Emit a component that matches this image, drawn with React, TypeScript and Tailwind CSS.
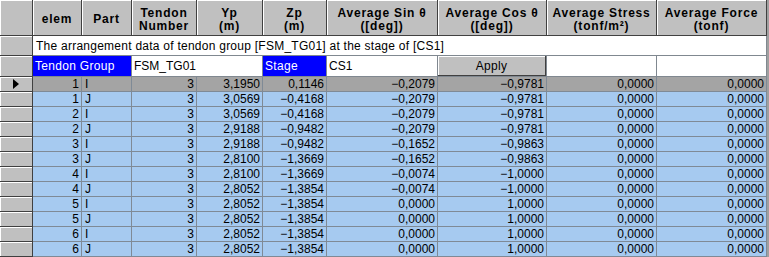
const cols = "grid-cols-[33px_49px_50px_65px_66px_64px_111px_109px_110px_110px]";

const rows = [
  ["1", "I", "3", "3,1950", "0,1146", "−0,2079", "−0,9781"],
  ["1", "J", "3", "3,0569", "−0,4168", "−0,2079", "−0,9781"],
  ["2", "I", "3", "3,0569", "−0,4168", "−0,2079", "−0,9781"],
  ["2", "J", "3", "2,9188", "−0,9482", "−0,2079", "−0,9781"],
  ["3", "I", "3", "2,9188", "−0,9482", "−0,1652", "−0,9863"],
  ["3", "J", "3", "2,8100", "−1,3669", "−0,1652", "−0,9863"],
  ["4", "I", "3", "2,8100", "−1,3669", "−0,0074", "−1,0000"],
  ["4", "J", "3", "2,8052", "−1,3854", "−0,0074", "−1,0000"],
  ["5", "I", "3", "2,8052", "−1,3854", "0,0000", "1,0000"],
  ["5", "J", "3", "2,8052", "−1,3854", "0,0000", "1,0000"],
  ["6", "I", "3", "2,8052", "−1,3854", "0,0000", "1,0000"],
  ["6", "J", "3", "2,8052", "−1,3854", "0,0000", "1,0000"],
];

const headers: [string, string?][] = [
  ["elem"],
  ["Part"],
  ["Tendon", "Number"],
  ["Yp", "(m)"],
  ["Zp", "(m)"],
  ["Average Sin θ", "([deg])"],
  ["Average Cos θ", "([deg])"],
  ["Average Stress", "(tonf/m²)"],
  ["Average Force", "(tonf)"],
];

const rowHead =
  "bg-[#c0c0c0] border-r border-b border-[#404040] shadow-[inset_1px_1px_0_#ffffff]";

export default function App() {
  return (
    <div
      className="w-[769px] h-[257px] overflow-hidden bg-[#a0a0a0] text-black"
      style={{ fontFamily: '"Liberation Sans", Arial, sans-serif' }}
    >
      <div className="w-[767px]">
        {/* column headers */}
        <div className={`grid ${cols} h-[36px]`}>
          <div className={rowHead} />
          {headers.map(([a, b]) => (
            <div
              key={a}
              className="flex flex-col items-center justify-center pt-[4px] bg-[#c0c0c0] border-r border-b border-[#404040] shadow-[inset_1px_1px_0_#ffffff] text-[12px] font-bold leading-[13px] tracking-[0.8px]"
            >
              <span>{a}</span>
              {b && <span>{b}</span>}
            </div>
          ))}
        </div>

        {/* caption row */}
        <div className="grid grid-cols-[33px_734px] h-[20px]">
          <div className={rowHead} />
          <div className="bg-white border-r border-b border-[#808890] flex items-center pl-[3px] text-[12px] tracking-[0.25px]">
            The arrangement data of tendon group [FSM_TG01] at the stage of [CS1]
          </div>
        </div>

        {/* group / stage row */}
        <div className="grid grid-cols-[33px_99px_131px_64px_111px_109px_110px_110px] h-[21px] text-[12px]">
          <div className={rowHead} />
          <div className="bg-[#0000ff] text-white border-r border-b border-[#808890] flex items-center pl-[2px] tracking-[0.3px]">
            Tendon Group
          </div>
          <div className="bg-white border-r border-b border-[#808890] flex items-center pl-[2px]">
            FSM_TG01
          </div>
          <div className="bg-[#0000ff] text-white border-r border-b border-[#808890] flex items-center pl-[2px] tracking-[0.3px]">
            Stage
          </div>
          <div className="bg-white border-r border-b border-[#808890] flex items-center pl-[2px]">
            CS1
          </div>
          <div className="bg-white border-r border-b border-[#808890] p-0">
            <div className="h-full bg-[#c0c0c0] border-r border-b border-[#404040] shadow-[inset_1px_1px_0_#ffffff] flex items-center justify-center tracking-[0.3px]">
              Apply
            </div>
          </div>
          <div className="bg-white border-r border-b border-[#808890]" />
          <div className="bg-white border-r border-b border-[#808890]" />
        </div>

        {/* data rows */}
        {rows.map((r, i) => {
          const bg = i === 0 ? "bg-[#a4a4a4]" : "bg-[#a6caf0]";
          const cell = `${bg} border-r border-b border-[#7f8a96] flex items-center text-[12px] leading-none`;
          return (
            <div key={i} className={`grid ${cols} h-[15px]`}>
              <div className={`${rowHead} flex items-center justify-center`}>
                {i === 0 && (
                  <svg width="6" height="10" viewBox="0 0 6 10">
                    <path d="M0 0L6 5L0 10Z" fill="#000" />
                  </svg>
                )}
              </div>
              <div className={`${cell} justify-end pr-[2px]`}>{r[0]}</div>
              <div className={`${cell} pl-[3px]`}>{r[1]}</div>
              <div className={`${cell} justify-end pr-[2px]`}>{r[2]}</div>
              <div className={`${cell} justify-end pr-[2px]`}>{r[3]}</div>
              <div className={`${cell} justify-end pr-[2px]`}>{r[4]}</div>
              <div className={`${cell} justify-end pr-[2px]`}>{r[5]}</div>
              <div className={`${cell} justify-end pr-[2px]`}>{r[6]}</div>
              <div className={`${cell} justify-end pr-[2px]`}>0,0000</div>
              <div className={`${cell} justify-end pr-[2px]`}>0,0000</div>
            </div>
          );
        })}
      </div>
    </div>
  );
}
